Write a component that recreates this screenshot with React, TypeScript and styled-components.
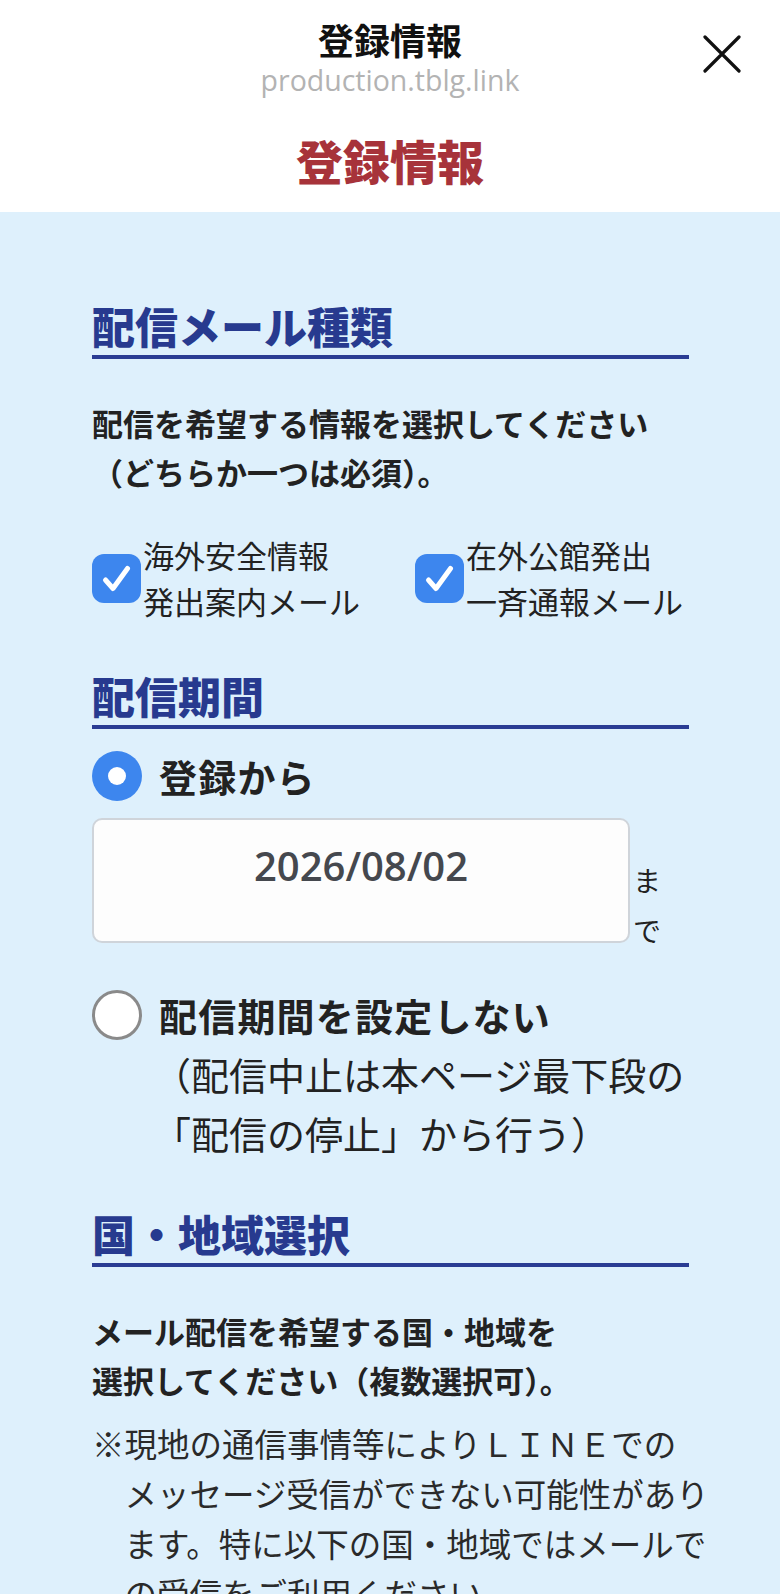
import React from "react";
import styled, { createGlobalStyle } from "styled-components";

const JP = `"Noto Sans CJK JP", "Noto Sans", sans-serif`;

const App: React.FC = () => {
  return (
    <>
      <GlobalStyle />
      <Header>
        <TopBar>
          <span />
          <TitleStack>
            <NavTitle>登録情報</NavTitle>
            <Domain>production.tblg.link</Domain>
          </TitleStack>
          <CloseButton aria-label="閉じる">
            <svg width="38" height="38" viewBox="0 0 38 38">
              <path d="M2 2 L36 36 M36 2 L2 36" stroke="#111" strokeWidth="3.2" strokeLinecap="round" fill="none" />
            </svg>
          </CloseButton>
        </TopBar>
        <PageTitle>登録情報</PageTitle>
      </Header>

      <Main>
        <Section>
          <Heading>配信メール種類</Heading>
          <Lead>
            配信を希望する情報を選択してください
            <br />
            （どちらか一つは必須）。
          </Lead>
          <CheckRow>
            <CheckItem $width={323}>
              <CheckBox checked />
              <CheckLabel>
                海外安全情報
                <br />
                発出案内メール
              </CheckLabel>
            </CheckItem>
            <CheckItem>
              <CheckBox checked />
              <CheckLabel>
                在外公館発出
                <br />
                一斉通報メール
              </CheckLabel>
            </CheckItem>
          </CheckRow>
        </Section>

        <Section>
          <Heading>配信期間</Heading>
          <RadioRow $gap={21}>
            <Radio checked />
            <RadioLabel>
              <strong>登録から</strong>
            </RadioLabel>
          </RadioRow>
          <DateRow>
            <DateField>2026/08/02</DateField>
            <Until>まで</Until>
          </DateRow>
          <RadioRow $gap={46}>
            <Radio />
            <RadioLabel>
              <strong>配信期間を設定しない</strong>
              <br />
              （配信中止は本ページ最下段の
              <br />
              「配信の停止」から行う）
            </RadioLabel>
          </RadioRow>
        </Section>

        <Section>
          <Heading>国・地域選択</Heading>
          <Lead>
            メール配信を希望する国・地域を
            <br />
            選択してください（複数選択可）。
          </Lead>
          <Note>
            ※現地の通信事情等によりＬＩＮＥでの
            <br />
            メッセージ受信ができない可能性があり
            <br />
            ます。特に以下の国・地域ではメールで
            <br />
            の受信をご利用ください。
          </Note>
        </Section>
      </Main>
    </>
  );
};

const CheckBox: React.FC<{ checked?: boolean }> = ({ checked }) => (
  <Box $checked={checked}>
    {checked && (
      <svg width="49" height="49" viewBox="0 0 49 49">
        <path d="M13.5 26 L21 34.5 L35.5 14.5" stroke="#fff" strokeWidth="5" strokeLinecap="round" strokeLinejoin="round" fill="none" />
      </svg>
    )}
  </Box>
);

const GlobalStyle = createGlobalStyle`
  body {
    margin: 0;
    background: #ffffff;
    font-family: ${JP};
    color: #222;
  }
`;

const Header = styled.header`
  background: #ffffff;
  padding: 16px 0 20px;
`;
const TopBar = styled.div`
  display: grid;
  grid-template-columns: 1fr auto 1fr;
  align-items: center;
`;
const TitleStack = styled.div`
  display: flex;
  flex-direction: column;
  align-items: center;
`;
const NavTitle = styled.div`
  font-size: 36px;
  line-height: 46px;
  font-weight: 700;
  color: #111;
`;
const Domain = styled.div`
  font-family: "Open Sans", "Liberation Sans", sans-serif;
  font-size: 28.5px;
  line-height: 36px;
  color: #b3b3b3;
`;
const CloseButton = styled.button`
  justify-self: end;
  margin: 0 39px 7px 0;
  width: 38px;
  height: 38px;
  padding: 0;
  border: none;
  background: none;
  display: flex;
`;
const PageTitle = styled.h1`
  margin: 30px 0 0;
  text-align: center;
  font-size: 47px;
  line-height: 64px;
  font-weight: 900;
  color: #a7333a;
`;

const Main = styled.main`
  background: #def0fc;
  padding: 87px 91px 40px 92px;
`;
const Section = styled.section`
  & + & {
    margin-top: 45px;
  }
`;
const Heading = styled.h2`
  margin: 0;
  font-size: 43px;
  line-height: 52px;
  font-weight: 900;
  color: #273a8f;
  padding-bottom: 4px;
  border-bottom: 4px solid #2a3c93;
`;
const Lead = styled.p`
  margin: 39px 0 0;
  font-size: 31px;
  line-height: 49px;
  font-weight: 700;
  color: #222;
`;
const CheckRow = styled.div`
  display: flex;
  margin-top: 36px;
`;
const CheckItem = styled.label<{ $width?: number }>`
  display: flex;
  align-items: center;
  gap: 2px;
  width: ${(p) => (p.$width ? `${p.$width}px` : "auto")};
`;
const Box = styled.span<{ $checked?: boolean }>`
  flex: none;
  display: flex;
  width: 49px;
  height: 49px;
  border-radius: 12px;
  background: ${(p) => (p.$checked ? "#3d86ee" : "#fff")};
`;
const CheckLabel = styled.span`
  font-size: 31px;
  line-height: 46px;
  color: #222;
`;

const RadioRow = styled.div<{ $gap: number }>`
  display: flex;
  align-items: flex-start;
  gap: 17px;
  margin-top: ${(p) => p.$gap}px;
`;
const Radio = styled.span<{ checked?: boolean }>`
  flex: none;
  box-sizing: border-box;
  width: 50px;
  height: 50px;
  margin-top: 1px;
  border-radius: 50%;
  background: ${(p) => (p.checked ? "#3d86ee" : "#fff")};
  border: ${(p) => (p.checked ? "none" : "3px solid #8a8a8a")};
  display: flex;
  align-items: center;
  justify-content: center;
  &::after {
    content: "";
    display: ${(p) => (p.checked ? "block" : "none")};
    width: 18px;
    height: 18px;
    border-radius: 50%;
    background: #fff;
  }
`;
const RadioLabel = styled.div`
  font-size: 38px;
  line-height: 59px;
  margin-top: -4px;
  margin-left: -6px;
  white-space: nowrap;
  color: #222;
  strong {
    display: inline-block;
    margin-left: 6px;
    font-weight: 700;
    letter-spacing: 1.2px;
  }
`;
const DateRow = styled.div`
  display: flex;
  align-items: flex-end;
  gap: 3px;
  margin-top: 13px;
`;
const DateField = styled.div`
  box-sizing: border-box;
  width: 538px;
  height: 125px;
  padding-top: 21px;
  background: #fdfdfd;
  border: 2px solid #cfd4da;
  border-radius: 10px;
  text-align: center;
  font-family: "Open Sans", "Noto Sans", sans-serif;
  font-size: 40px;
  line-height: 50px;
  font-weight: 600;
  color: #45484e;
`;
const Until = styled.div`
  width: 28px;
  font-size: 28px;
  line-height: 50px;
  margin-bottom: -12px;
  color: #222;
`;
const Note = styled.p`
  margin: 14px 0 0;
  padding-left: 1em;
  text-indent: -1em;
  font-size: 32.5px;
  line-height: 50px;
  color: #2a2a2a;
  white-space: nowrap;
`;

export default App;
